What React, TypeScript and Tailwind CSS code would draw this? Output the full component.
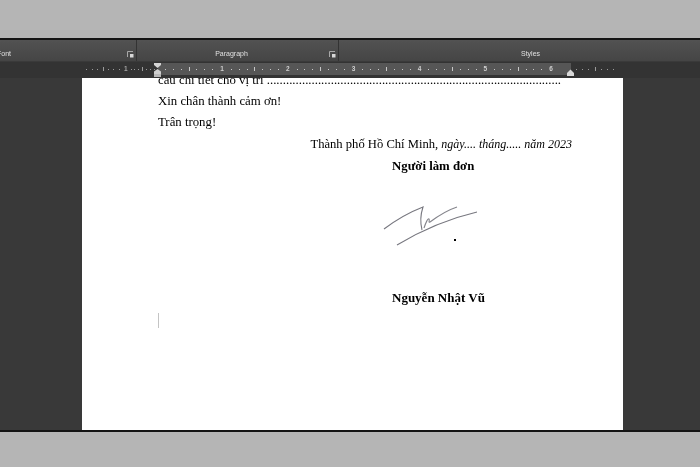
const inches = ["1", "2", "3", "4", "5", "6"];

function Ticks({ dim }: { dim?: boolean }) {
  return (
    <div className={`flex flex-1 items-center justify-evenly ${dim ? "opacity-70" : ""}`}>
      <span className="w-[1px] h-[1px] bg-[#c8c8c8]" />
      <span className="w-[1px] h-[1px] bg-[#c8c8c8]" />
      <span className="w-[1px] h-[1px] bg-[#c8c8c8]" />
      <span className="w-[1px] h-[4px] bg-[#c8c8c8]" />
      <span className="w-[1px] h-[1px] bg-[#c8c8c8]" />
      <span className="w-[1px] h-[1px] bg-[#c8c8c8]" />
      <span className="w-[1px] h-[1px] bg-[#c8c8c8]" />
    </div>
  );
}

function DialogLauncher() {
  return (
    <svg width="7" height="7" viewBox="0 0 7 7" className="text-[#a8a8a8]">
      <path d="M0.5 6V0.5H6" fill="none" stroke="currentColor" />
      <path d="M3 3H6.5V6.5H3Z" fill="#d8d8d8" />
    </svg>
  );
}

function Signature() {
  return (
    <svg width="98" height="46" viewBox="0 0 98 46" className="block">
      <path d="M2 25C14 16 28 8 41 3C39 9 38 18 40 26" fill="none" stroke="#77777f" strokeWidth="1.1" />
      <path d="M42 24C44 18 46 14 47 15C48 16 46 19 48 18C56 12 66 6 75 3" fill="none" stroke="#85858c" strokeWidth="1.1" />
      <path d="M15 41C35 29 65 15 95 8" fill="none" stroke="#77777f" strokeWidth="1.1" />
    </svg>
  );
}

export default function App() {
  return (
    <div className="w-[700px] h-[467px] overflow-hidden flex flex-col bg-[#b5b5b5] font-['Liberation_Sans',sans-serif]">
      <div className="h-[38px] shrink-0" />

      <div className="h-[394px] shrink-0 flex flex-col bg-[#393939] border-y-2 border-[#141414] relative blur-[0.35px]">
        {/* Ribbon group labels */}
        <div className="h-[22px] shrink-0 flex bg-gradient-to-b from-[#525252] to-[#454545] text-[7px] text-[#e0e0e0] border-b border-[#3a3a3a] overflow-hidden">
          <div className="w-[137px] shrink-0 flex items-end justify-between pb-[2px] pr-[2px] border-r border-[#333333]">
            <span className="-ml-[3px]">Font</span>
            <span className="mb-[1px] flex">
              <DialogLauncher />
            </span>
          </div>
          <div className="w-[202px] shrink-0 relative flex items-end justify-center pb-[2px] border-r border-[#333333]">
            <span className="pr-[12px]">Paragraph</span>
            <span className="absolute right-[2px] bottom-[3px] flex">
              <DialogLauncher />
            </span>
          </div>
          <div className="flex-1 flex items-end justify-center pb-[2px] pl-[22px]">
            <span>Styles</span>
          </div>
        </div>

        {/* Ruler */}
        <div className="h-[16px] shrink-0 flex bg-[#333333] relative text-[6.5px] font-bold text-[#d0d0d0] pb-[3px] pt-[1px]">
          <div className="w-[82px] shrink-0" />
          <div className="w-[76px] shrink-0 flex items-center">
            <div className="w-[42px] flex">
              <Ticks dim />
            </div>
            <span className="opacity-70">1</span>
            <Ticks dim />
          </div>
          <div className="w-[413px] shrink-0 flex items-center bg-[#565656]">
            {inches.map((n) => (
              <div key={n} className="flex flex-1 items-center">
                <Ticks />
                <span>{n}</span>
              </div>
            ))}
            <div className="w-[18px]" />
          </div>
          <div className="flex w-[48px] items-center">
            <Ticks dim />
          </div>
          {/* Indent markers */}
          <svg width="10" height="15" viewBox="0 0 10 15" className="absolute left-[153px] top-0">
            <path d="M1 1H8V3L4.5 6L1 3Z" fill="#d4d4d4" />
            <path d="M1 12V9.5L4.5 7L8 9.5V12Z" fill="#cfcfcf" />
            <rect x="1" y="12" width="7" height="3" fill="#b8b8b8" />
          </svg>
          <svg width="10" height="8" viewBox="0 0 10 8" className="absolute left-[566px] top-[7px]">
            <path d="M1 7V4L4.5 0.5L8 4V7Z" fill="#d8d8d8" />
          </svg>
        </div>

        {/* Document area */}
        <div className="flex-1 min-h-0 flex pl-[82px] bg-[#393939]">
          <div className="relative w-[541px] h-full overflow-hidden bg-white font-['Liberation_Serif',serif] text-[12.8px] leading-[21px] text-black">
            <div className="pl-[76px] pr-[51px] -mt-[8px]">
              <p className="whitespace-nowrap">
                câu chi tiết cho vị trí ............................................................................................
              </p>
              <p>Xin chân thành cảm ơn!</p>
              <p>Trân trọng!</p>
              <p className="mt-[1px] text-right whitespace-nowrap">
                <span className="text-[12.6px]">Thành phố Hồ Chí Minh, </span>
                <i className="text-[12px]">ngày.... tháng..... năm 2023</i>
              </p>
              <div className="ml-[234px] flex flex-col items-start whitespace-nowrap font-bold">
                <p className="mt-[1px]">Người làm đơn</p>
                <div className="mt-[27px] h-[46px] -ml-[10px]">
                  <Signature />
                </div>
                <p className="mt-[37px] text-[13px]">Nguyễn Nhật Vũ</p>
              </div>
              <div className="mt-[5px] w-[1px] h-[15px] bg-[#c4c4c4]" />
            </div>
            <span className="absolute left-[372px] top-[161px] w-[1.5px] h-[1.5px] bg-black" />
          </div>
        </div>
      </div>
    </div>
  );
}
